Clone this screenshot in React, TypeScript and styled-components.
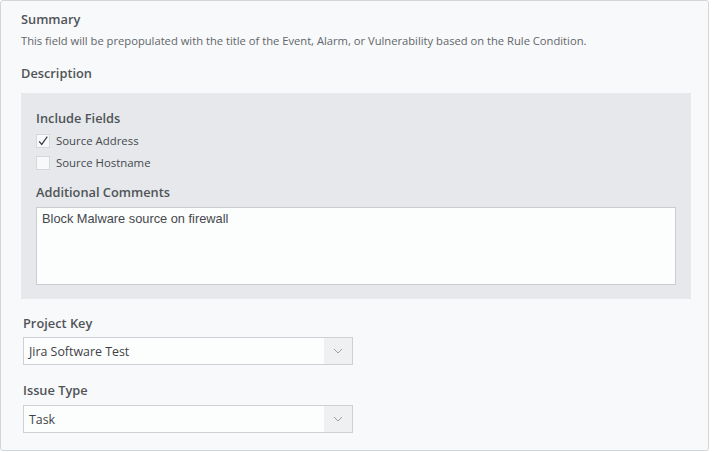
import { FC } from 'react';
import styled, { createGlobalStyle } from 'styled-components';

const GlobalStyle = createGlobalStyle`
  html, body {
    margin: 0;
    padding: 0;
    background: #ffffff;
  }
  body {
    font-family: "Open Sans", Lato, sans-serif;
    color: #3f4347;
  }
`;

interface SelectProps {
  value: string;
}

const Select: FC<SelectProps> = ({ value }) => (
  <SelectBox>
    <SelectValue>{value}</SelectValue>
    <SelectArrow>
      <svg width="10" height="6" viewBox="0 0 10 6">
        <path d="M1 1 L5 5 L9 1" fill="none" stroke="#9aa0a6" strokeWidth="1" />
      </svg>
    </SelectArrow>
  </SelectBox>
);

interface CheckProps {
  label: string;
  checked?: boolean;
}

const Check: FC<CheckProps> = ({ label, checked }) => (
  <CheckRow>
    <CheckBox>
      {checked && (
        <svg width="14" height="14" viewBox="0 0 14 14">
          <path d="M2.5 7.5 L5.5 11 L12 2" fill="none" stroke="#3a3d40" strokeWidth="1.4" />
        </svg>
      )}
    </CheckBox>
    <CheckLabel>{label}</CheckLabel>
  </CheckRow>
);

export default function App() {
  return (
    <>
      <GlobalStyle />
      <Container>
        <Label>Summary</Label>
        <Help>
          This field will be prepopulated with the title of the Event, Alarm, or Vulnerability based on the Rule
          Condition.
        </Help>
        <Label $top={16}>Description</Label>
        <Panel>
          <Label>Include Fields</Label>
          <Checks>
            <Check label="Source Address" checked />
            <Check label="Source Hostname" />
          </Checks>
          <Label $top={13}>Additional Comments</Label>
          <TextArea>Block Malware source on firewall</TextArea>
        </Panel>
        <Field>
          <Label>Project Key</Label>
          <Select value="Jira Software Test" />
        </Field>
        <Field $top={16} $gap={6}>
          <Label>Issue Type</Label>
          <Select value="Task" />
        </Field>
      </Container>
    </>
  );
}

const Container = styled.div`
  box-sizing: border-box;
  width: 709px;
  height: 451px;
  padding: 9px 20px 0 20px;
  background: #f8f9fa;
  border: 1px solid #d3d6d9;
  border-radius: 3px;
  display: flex;
  flex-direction: column;
`;

const Label = styled.div<{ $top?: number }>`
  font-size: 12.8px;
  font-weight: 600;
  color: #505458;
  line-height: 18px;
  margin-top: ${({ $top }) => $top ?? 0}px;
`;

const Help = styled.div`
  font-size: 11.2px;
  color: #62666a;
  line-height: 14px;
  margin-top: 6px;
  white-space: nowrap;
`;

const Panel = styled.div`
  margin-top: 11px;
  width: 670px;
  box-sizing: border-box;
  padding: 16px 15px 14px 15px;
  background: #e6e8eb;
  display: flex;
  flex-direction: column;
`;

const Checks = styled.div`
  display: flex;
  flex-direction: column;
  gap: 8px;
  margin-top: 7px;
`;

const CheckRow = styled.div`
  display: flex;
  align-items: center;
  gap: 6px;
`;

const CheckBox = styled.div`
  width: 14px;
  height: 14px;
  box-sizing: border-box;
  background: #f8f9fa;
  border: 1px solid #d5d8db;
  display: flex;
  align-items: center;
  justify-content: center;
  svg {
    display: block;
  }
`;

const CheckLabel = styled.span`
  font-size: 11.4px;
  line-height: 14px;
  color: #45494d;
`;

const TextArea = styled.div`
  margin-top: 6px;
  height: 78px;
  box-sizing: border-box;
  padding: 3px 5px;
  background: #fcfdfd;
  border: 1px solid #c9cdd1;
  font-family: "Liberation Sans", Arial, sans-serif;
  font-size: 12.8px;
  color: #44484c;
`;

const Field = styled.div<{ $top?: number; $gap?: number }>`
  display: flex;
  flex-direction: column;
  gap: ${({ $gap }) => $gap ?? 5}px;
  margin-top: ${({ $top }) => $top ?? 15}px;
  padding-left: 2px;
`;

const SelectBox = styled.div`
  width: 330px;
  height: 28px;
  box-sizing: border-box;
  background: #fcfdfd;
  border: 1px solid #cdd1d5;
  display: flex;
  align-items: stretch;
`;

const SelectValue = styled.div`
  flex: 1;
  display: flex;
  align-items: center;
  padding-left: 5px;
  font-size: 12.4px;
  color: #3e4246;
`;

const SelectArrow = styled.div`
  width: 28px;
  background: #eef0f2;
  display: flex;
  align-items: center;
  justify-content: center;
`;
